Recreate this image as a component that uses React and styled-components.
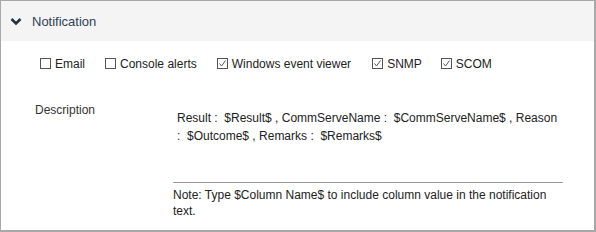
import React from "react";
import styled, { createGlobalStyle } from "styled-components";

const GlobalStyle = createGlobalStyle`
  body {
    margin: 0;
    font-family: "Liberation Sans", Arial, sans-serif;
    background: #fff;
  }
`;

const Panel = styled.div`
  box-sizing: border-box;
  width: 596px;
  height: 232px;
  border: 1px solid #a8a8a8;
  border-right-width: 2px;
  border-bottom-width: 2px;
  display: flex;
  flex-direction: column;
`;

const Header = styled.div`
  height: 40px;
  background-color: #f4f4f4;
  display: flex;
  align-items: center;
  padding-left: 9px;
  gap: 10px;
  color: #2e4256;
  font-size: 13px;
`;

const Body = styled.div`
  display: flex;
  flex-direction: column;
`;

const CheckRow = styled.div`
  display: flex;
  align-items: center;
  padding: 15px 0 0 39px;
  height: 15px;
`;

const CheckItem = styled.label`
  display: flex;
  align-items: center;
  gap: 4px;
  margin-right: ${(p) => p.$gap}px;
  font-size: 12px;
  color: #222;
`;

const DescRow = styled.div`
  display: flex;
  padding-top: 32px;
`;

const Label = styled.div`
  width: 172px;
  padding-left: 34px;
  box-sizing: border-box;
  font-size: 12px;
  color: #333;
`;

const Field = styled.div`
  width: 390px;
  display: flex;
  flex-direction: column;
`;

const TextArea = styled.div`
  height: 73px;
  border-bottom: 1px solid #999;
  padding: 6px 0 0 4px;
  font-size: 12px;
  line-height: 18px;
  color: #222;
`;

const Note = styled.div`
  padding-top: 4px;
  font-size: 12px;
  line-height: 16px;
  color: #222;
`;

const Chevron = () => (
  <svg width="12" height="9" viewBox="0 0 12 9">
    <path d="M1.5 2 L6 6.5 L10.5 2" fill="none" stroke="#1f3347" strokeWidth="2.6" />
  </svg>
);

const Box = ({ checked }) => (
  <svg width="11" height="11" viewBox="0 0 11 11">
    <rect x="0.5" y="0.5" width="10" height="10" fill="none" stroke="#555" strokeWidth="1" />
    {checked && (
      <path d="M2.5 5.5 L4.5 8 L8.5 2.5" fill="none" stroke="#555" strokeWidth="1" />
    )}
  </svg>
);

const options = [
  { label: "Email", checked: false, gap: 20 },
  { label: "Console alerts", checked: false, gap: 20 },
  { label: "Windows event viewer", checked: true, gap: 21 },
  { label: "SNMP", checked: true, gap: 19 },
  { label: "SCOM", checked: true, gap: 0 },
];

export default function App() {
  return (
    <>
      <GlobalStyle />
      <Panel>
        <Header>
          <Chevron />
          <span>Notification</span>
        </Header>
        <Body>
          <CheckRow>
            {options.map((o) => (
              <CheckItem key={o.label} $gap={o.gap}>
                <Box checked={o.checked} />
                {o.label}
              </CheckItem>
            ))}
          </CheckRow>
          <DescRow>
            <Label>Description</Label>
            <Field>
              <TextArea>
                Result :&nbsp; $Result$ , CommServeName :&nbsp; $CommServeName$ , Reason
                <br />
                :&nbsp; $Outcome$ , Remarks :&nbsp; $Remarks$
              </TextArea>
              <Note>Note: Type $Column Name$ to include column value in the notification text.</Note>
            </Field>
          </DescRow>
        </Body>
      </Panel>
    </>
  );
}
